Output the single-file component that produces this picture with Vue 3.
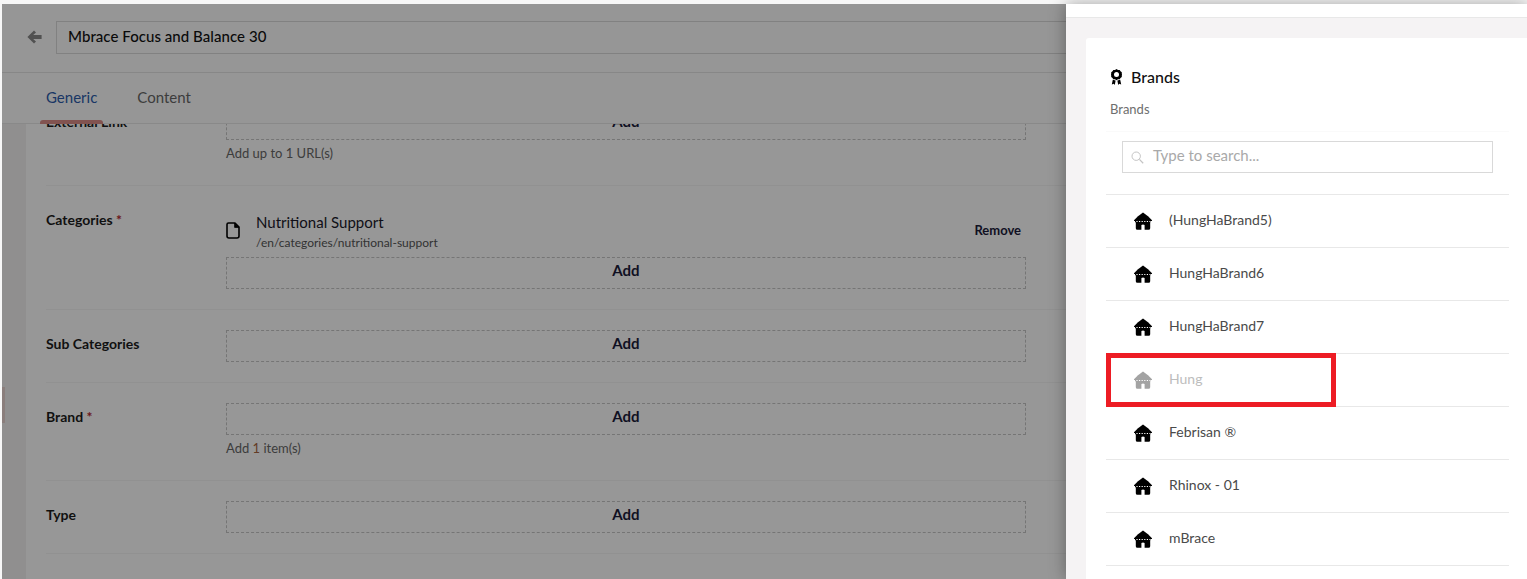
<template>
  <div class="page">
    <div class="main">
      <header class="top-bar">
        <svg class="back" width="15" height="14" viewBox="0 0 15 14">
          <path d="M7 0.4 L0.4 7 L7 13.6 L9 11.6 L6.2 8.9 H14.6 V5.1 H6.2 L9 2.4 Z" fill="#888" />
        </svg>
        <div class="title-input">Mbrace Focus and Balance 30</div>
      </header>
      <nav class="tabs">
        <span class="tab active">Generic</span>
        <span class="tab">Content</span>
      </nav>
      <div class="body">
        <aside class="rail"><span class="rail-mark"></span></aside>
        <section class="form">
          <div class="form-inner">
            <div class="row">
              <label class="label">External Link</label>
              <div class="field">
                <button class="add">Add</button>
                <p class="hint">Add up to 1 URL(s)</p>
              </div>
            </div>
            <div class="row">
              <label class="label">Categories <em>*</em></label>
              <div class="field">
                <div class="picked">
                  <svg class="file" width="14" height="17" viewBox="0 0 14 17">
                    <path d="M2.5 1 H9 L13 5 V14 Q13 16 11 16 H3 Q1 16 1 14 V2.5 Q1 1 2.5 1 Z" fill="none" stroke="#000" stroke-width="1.6" stroke-linejoin="round" />
                    <path d="M8.6 1 V5.4 H13" fill="#000" stroke="#000" stroke-width="0.8" />
                  </svg>
                  <div class="picked-text">
                    <div class="picked-name">Nutritional Support</div>
                    <div class="picked-url">/en/categories/nutritional-support</div>
                  </div>
                  <a class="remove">Remove</a>
                </div>
                <button class="add">Add</button>
              </div>
            </div>
            <div class="row">
              <label class="label">Sub Categories</label>
              <div class="field"><button class="add">Add</button></div>
            </div>
            <div class="row">
              <label class="label">Brand <em>*</em></label>
              <div class="field">
                <button class="add">Add</button>
                <p class="hint">Add <span class="num">1</span> item(s)</p>
              </div>
            </div>
            <div class="row">
              <label class="label">Type</label>
              <div class="field"><button class="add">Add</button></div>
            </div>
          </div>
        </section>
      </div>
    </div>

    <div class="overlay"></div>

    <div class="drawer">
      <div class="drawer-top"></div>
      <div class="card">
        <h3 class="card-title">
          <svg width="11" height="16" viewBox="0 0 11 16">
            <path d="M5.5 0 L7 0.9 L8.7 0.9 L9.5 2.3 L10.8 3.2 L10.8 4.8 L11 5.6 L10.8 6.4 L10.8 8 L9.5 8.9 L8.7 10.3 L7 10.3 L5.5 11.2 L4 10.3 L2.3 10.3 L1.5 8.9 L0.2 8 L0.2 6.4 L0 5.6 L0.2 4.8 L0.2 3.2 L1.5 2.3 L2.3 0.9 L4 0.9 Z" fill="#000" />
            <circle cx="5.5" cy="5.6" r="2.5" fill="#fff" />
            <path d="M1.8 10.8 L4.6 11.6 L3.8 16 L2.8 14.8 L0.8 15.6 Z M9.2 10.8 L6.4 11.6 L7.2 16 L8.2 14.8 L10.2 15.6 Z" fill="#000" />
          </svg>
          Brands
        </h3>
        <p class="card-desc">Brands</p>
        <div class="search-wrap">
          <div class="search">
            <svg width="13" height="13" viewBox="0 0 13 13">
              <circle cx="5.2" cy="5.2" r="4.2" fill="none" stroke="#c4c4c4" stroke-width="1" />
              <path d="M8.4 8.4 L12.2 12.2" stroke="#c4c4c4" stroke-width="1.3" />
            </svg>
            <span>Type to search...</span>
          </div>
        </div>
        <ul class="list">
          <li v-for="brand in brands" :key="brand.name" class="item" :class="{ disabled: brand.disabled }">
            <svg width="18" height="18" viewBox="0 0 18 18">
              <path d="M9 0.4 L14 4.2 L18 8.2 V8.9 H0 V8.2 L4 4.2 Z" fill="currentColor" />
              <path d="M1.8 10 H16.2 V16.2 Q16.2 17.8 14.6 17.8 H10.6 V13 Q9 11.8 7.4 13 V17.8 H3.4 Q1.8 17.8 1.8 16.2 Z" fill="currentColor" />
              <path d="M1 9.6 H17" stroke="currentColor" stroke-width="1.2" stroke-dasharray="1.4 1.2" fill="none" />
            </svg>
            <span class="item-name">{{ brand.name }}</span>
          </li>
        </ul>
      </div>
    </div>

    <div class="highlight"></div>
  </div>
</template>

<script setup>
const brands = [
  { name: '(HungHaBrand5)' },
  { name: 'HungHaBrand6' },
  { name: 'HungHaBrand7' },
  { name: 'Hung', disabled: true },
  { name: 'Febrisan ®' },
  { name: 'Rhinox - 01' },
  { name: 'mBrace' }
]
</script>

<style>
html,
body {
  margin: 0;
  overflow: hidden;
}
</style>

<style scoped>
.page {
  position: relative;
  width: 1527px;
  height: 579px;
  overflow: hidden;
  box-sizing: border-box;
  padding: 4px 0 0 2px;
  background: #f7f7f7;
  font-family: Lato, "Open Sans", sans-serif;
  color: #1a1a1a;
}

.main {
  display: flex;
  flex-direction: column;
  height: 575px;
  width: 1064px;
  background: #fff;
}

.top-bar {
  display: flex;
  align-items: center;
  flex: none;
  height: 69px;
  box-sizing: border-box;
  padding: 0 0 2px 25px;
  gap: 14px;
  border-bottom: 1px solid #e2e2e2;
  background: #fbfbfb;
}

.title-input {
  flex: 1;
  height: 33px;
  box-sizing: border-box;
  padding-left: 11px;
  line-height: 29px;
  font-size: 15px;
  font-weight: 500;
  letter-spacing: 0.05px;
  border: 1px solid #d8d8d8;
  border-right: 0;
  color: #111;
}

.tabs {
  display: flex;
  flex: none;
  height: 51px;
  box-sizing: border-box;
  padding-left: 44px;
  gap: 40px;
  border-bottom: 1px solid #e4e4e4;
  background: #fbfbfb;
}

.tab {
  position: relative;
  line-height: 49px;
  font-size: 15px;
  color: #666;
}

.tab.active {
  color: #2c5aa8;
}

.tab.active::after {
  content: "";
  position: absolute;
  left: -6px;
  right: -6px;
  bottom: -1px;
  height: 4px;
  border-radius: 3px 3px 0 0;
  background: #d98a85;
}

.body {
  flex: 1;
  display: flex;
  min-height: 0;
}

.rail {
  position: relative;
  width: 24px;
  flex: none;
  background: #f0eeee;
}

.rail-mark {
  position: absolute;
  left: 0;
  top: 263px;
  width: 3px;
  height: 36px;
  background: #e6d2cf;
}

.form {
  flex: 1;
  min-width: 0;
  overflow: hidden;
  background: #fcfcfc;
}

.form-inner {
  margin-top: -36px;
  padding-left: 20px;
}

.row {
  display: flex;
  padding: 20px 0;
  border-bottom: 1px solid #f2f2f2;
}

.label {
  width: 180px;
  flex: none;
  line-height: 28px;
  font-size: 14px;
  font-weight: 700;
  color: #1c1c1c;
}

.label em {
  font-style: normal;
  color: #b3262e;
}

.field {
  flex: 1;
  min-width: 0;
  padding-right: 40px;
}

.add {
  display: block;
  width: 100%;
  height: 32px;
  padding: 0 0 5px;
  border: 1px dashed #c4c4c4;
  border-radius: 0;
  background: none;
  font: 700 15px/25px Lato, sans-serif;
  color: #1b1b3a;
}

.hint {
  margin: 5px 0 4px;
  line-height: 16px;
  font-size: 13px;
  color: #666;
}

.hint .num {
  color: #a5633f;
}

.picked {
  display: flex;
  align-items: flex-start;
  height: 51px;
  box-sizing: border-box;
  padding-top: 6px;
}

.file {
  margin: 10px 16px 0 0;
  flex: none;
}

.picked-text {
  flex: 1;
}

.picked-name {
  line-height: 20px;
  font-size: 15px;
  color: #1a1a2a;
}

.picked-url {
  line-height: 16px;
  margin-top: 3px;
  font-size: 12px;
  color: #555;
}

.remove {
  margin: 10px 5px 0 0;
  line-height: 16px;
  font-size: 13px;
  font-weight: 700;
  color: #1b1b3a;
}

.overlay {
  position: absolute;
  inset: 4px 0 0 2px;
  background: rgba(0, 0, 0, 0.4);
}

.drawer {
  position: absolute;
  top: 4px;
  left: 1066px;
  right: 0;
  bottom: 0;
  display: flex;
  flex-direction: column;
  background: #f5f3f4;
  box-shadow: 0 0 16px rgba(0, 0, 0, 0.35);
}

.drawer-top {
  flex: none;
  height: 13px;
  background: #fff;
  border-bottom: 1px solid #e8e8e8;
}

.card {
  flex: 1;
  margin: 20px 0 0 20px;
  padding: 27px 18px 0 20px;
  background: #fff;
  border-radius: 3px 0 0 0;
}

.card-title {
  display: flex;
  align-items: center;
  gap: 9px;
  margin: 0 0 0 5px;
  line-height: 24px;
  font-size: 16px;
  font-weight: 500;
  color: #111;
}

.card-desc {
  margin: 12px 0 0 4px;
  line-height: 16px;
  font-size: 13px;
  color: #6e6e6e;
}

.search-wrap {
  margin-top: 14px;
  padding: 9px 16px 21px;
  border-top: 1px solid #fafafa;
}

.search {
  display: flex;
  align-items: center;
  gap: 9px;
  height: 32px;
  box-sizing: border-box;
  padding: 0 0 4px 8px;
  border: 1px solid #d9d9d9;
  font-size: 15px;
  color: #a9a9a9;
}

.search svg {
  position: relative;
  top: 2px;
}

.list {
  margin: 0;
  padding: 0;
  list-style: none;
  border-bottom: 1px solid #e8e8e8;
}

.item {
  display: flex;
  align-items: center;
  height: 53px;
  box-sizing: border-box;
  padding-left: 28px;
  gap: 17px;
  border-top: 1px solid #e8e8e8;
  color: #000;
}

.item-name {
  position: relative;
  top: -2px;
  font-size: 14px;
  color: #4a4a4a;
}

.item.disabled {
  color: #a3a3a3;
}

.item.disabled .item-name {
  color: #bdbdbd;
}

.highlight {
  position: absolute;
  left: 1106px;
  top: 353px;
  width: 230px;
  height: 54px;
  box-sizing: border-box;
  border: 5px solid #ed1c24;
}
</style>
